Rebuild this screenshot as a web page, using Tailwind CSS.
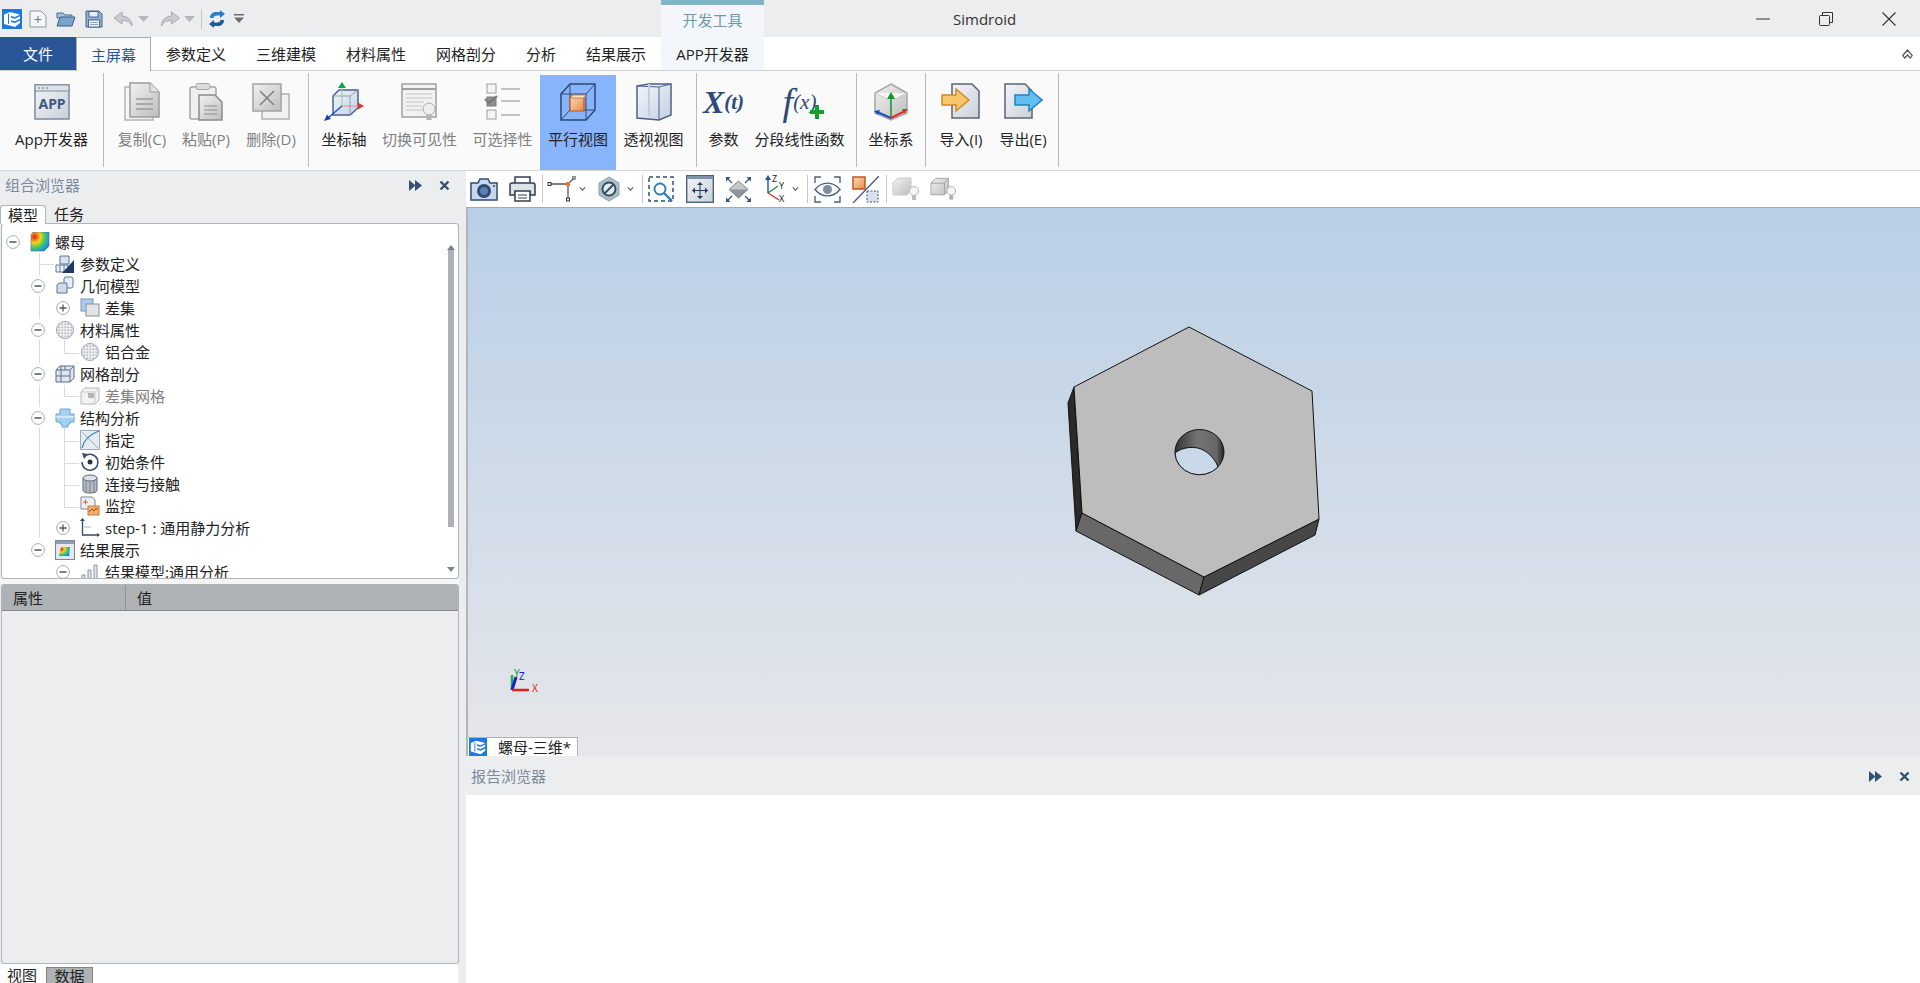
<!DOCTYPE html>
<html>
<head>
  <meta charset="utf-8" />
  <title>Simdroid</title>
  <script src="https://cdn.jsdelivr.net/npm/@tailwindcss/browser@4"></script>
</head>
<body class="w-[1920px] h-[983px] overflow-hidden flex flex-col bg-white text-[15px] leading-[20px] text-[#222] font-['Open_Sans','Noto_Sans_CJK_SC',sans-serif]">
  <svg class="absolute w-0 h-0">
    <defs>
      <linearGradient id="paper" x1="0" y1="0" x2="1" y2="1"><stop offset="0" stop-color="#f4f5f7"/><stop offset="1" stop-color="#c9d0da"/></linearGradient>
      <linearGradient id="gray" x1="0" y1="0" x2="1" y2="1"><stop offset="0" stop-color="#f2f2f2"/><stop offset="1" stop-color="#bdbdbd"/></linearGradient>
      <linearGradient id="glass" x1="0" y1="0" x2="1" y2="1"><stop offset="0" stop-color="#f3f6fa"/><stop offset="1" stop-color="#c3d0e2"/></linearGradient>
      <linearGradient id="orange" x1="0" y1="0" x2="1" y2="1"><stop offset="0" stop-color="#fbdcb8"/><stop offset="1" stop-color="#e98a45"/></linearGradient>
      <linearGradient id="wall" x1="0" y1="0" x2="1" y2="0"><stop offset="0" stop-color="#333"/><stop offset=".45" stop-color="#747474"/><stop offset=".85" stop-color="#666"/><stop offset="1" stop-color="#222"/></linearGradient>
      <radialGradient id="heat" cx=".2" cy=".25" r=".95"><stop offset="0" stop-color="#e8201a"/><stop offset=".35" stop-color="#f7d31a"/><stop offset=".6" stop-color="#46c95e"/><stop offset=".85" stop-color="#1c9ae0"/><stop offset="1" stop-color="#1c5fd0"/></radialGradient>
      <pattern id="dots" width="3" height="3" patternUnits="userSpaceOnUse"><rect width="3" height="3" fill="#eceef0"/><rect x=".5" y=".5" width="1.500" height="1.500" fill="#b2b6bb"/></pattern>
      <symbol id="logo" viewBox="0 0 20 20"><rect width="20" height="20" fill="#1f78dc"/><path d="M2 5.500L8 3l10 2.500-5 2.500-4-1v1.800l4 1 5-2.500v2.500l-5 2.500-4-1v1.800l4 1 5-2.500v2.500L13 18 2 15z" fill="#fff"/><path d="M6.500 5v10" stroke="#1f78dc"/></symbol>
      <symbol id="minus" viewBox="0 0 14 14"><circle cx="7" cy="7" r="6.400" fill="#fff" stroke="#a9adb1"/><path d="M3.500 7h7" stroke="#555" stroke-width="1.500"/></symbol>
      <symbol id="plus" viewBox="0 0 14 14"><circle cx="7" cy="7" r="6.400" fill="#fff" stroke="#a9adb1"/><path d="M3.500 7h7M7 3.500v7" stroke="#555" stroke-width="1.300"/></symbol>
      <symbol id="ball" viewBox="0 0 20 20"><circle cx="10" cy="10" r="8.500" fill="url(#dots)" stroke="#9aa3ad"/></symbol>
      <symbol id="chev" viewBox="0 0 8 6"><path d="M.8 1l3.200 3.400L7.200 1" fill="none" stroke="#555" stroke-width="1.200"/></symbol>
      <symbol id="ffw" viewBox="0 0 13 11"><path d="M0 0l6.500 5.500L0 11zM6 0l7 5.500L6 11z" fill="#33506f"/></symbol>
      <symbol id="cls" viewBox="0 0 11 11"><path d="M1.500 1.500l8 8M9.500 1.500l-8 8" stroke="#33506f" stroke-width="2.400"/></symbol>
    </defs>
  </svg>

  <!-- title bar -->
  <div class="h-[37px] bg-[#ecedef] flex items-center shrink-0">
    <div class="w-[661px] flex items-center h-full pl-[2px]">
      <svg class="w-[20px] h-[20px]"><use href="#logo"/></svg>
      <svg class="w-[18px] h-[18px] ml-[7px]" viewBox="0 0 18 18"><path d="M1 1h11l5 5v11H1z" fill="#f5f6f8" stroke="#8b97a8"/><path d="M9 6v7M5.500 9.500h7" stroke="#6c7787"/></svg>
      <svg class="w-[20px] h-[18px] ml-[9px]" viewBox="0 0 20 18"><path d="M1 3h6l2 2h7v3H1z" fill="#a8c0da" stroke="#4b6b90"/><path d="M1 16l3-9h15l-3 9z" fill="#7aa3cc" stroke="#3f6189"/></svg>
      <svg class="w-[18px] h-[18px] ml-[9px]" viewBox="0 0 18 18"><path d="M1 1h13l3 3v13H1z" fill="#8fb0d2" stroke="#48688c"/><rect x="4" y="1.500" width="9" height="5.500" fill="#e9eff6" stroke="#48688c"/><rect x="3.500" y="10" width="11" height="7" fill="#f2f4f7" stroke="#48688c"/><path d="M5 12.500h8M5 14.500h8" stroke="#8fa3ba"/></svg>
      <svg class="w-[21px] h-[18px] ml-[10px]" viewBox="0 0 21 18"><path d="M9 2L1 8l8 6v-3.500c5 0 8 1.500 10 5.500 0-6-4-9.500-10-10z" fill="#c9ccd1" stroke="#a6abb2"/></svg>
      <svg class="w-[11px] h-[6px] ml-[4px]" viewBox="0 0 11 6"><path d="M0 0h11L5.500 6z" fill="#b4b7bc"/></svg>
      <svg class="w-[22px] h-[18px] ml-[10px]" viewBox="0 0 21 18"><path d="M12 2l8 6-8 6v-3.500c-5 0-8 1.500-10 5.500 0-6 4-9.500 10-10z" fill="#c9ccd1" stroke="#a6abb2"/></svg>
      <svg class="w-[11px] h-[6px] ml-[3px]" viewBox="0 0 11 6"><path d="M0 0h11L5.500 6z" fill="#b4b7bc"/></svg>
      <div class="w-px h-[20px] bg-[#c4c6c9] ml-[6px]"></div>
      <svg class="w-[16px] h-[18px] ml-[7px]" viewBox="0 0 16 18"><path d="M1 8c0-4 3-6 6-6h4V0l5 4-5 4V5.500H8C6 5.500 4.500 6.500 4.500 8z" fill="#2b7fc7"/><path d="M15 10c0 4-3 6-6 6H5v2l-5-4 5-4v2.500h3c2 0 3.500-1 3.500-2.500z" fill="#1c5c98"/></svg>
      <svg class="w-[10px] h-[9px] ml-[9px]" viewBox="0 0 10 9"><path d="M0 0h10v1.500H0zM0 3.500h10L5 9z" fill="#6a6d72"/></svg>
    </div>
    <div class="w-[103px] h-full bg-[#f3f7fb] border-t-[5px] border-[#7fb5c4] text-[#6d9aa8] flex items-center justify-center pb-[2px]">开发工具</div>
    <div class="ml-[189px] text-[#333]">Simdroid</div>
    <div class="ml-auto flex h-full">
      <div class="w-[63px] flex items-center justify-center"><svg class="w-[14px] h-[14px]" viewBox="0 0 14 14"><path d="M0 7h14" stroke="#333"/></svg></div>
      <div class="w-[63px] flex items-center justify-center"><svg class="w-[14px] h-[14px]" viewBox="0 0 14 14"><path d="M3.500 3.500V.5h10v10h-3" fill="none" stroke="#333"/><rect x=".5" y="3.500" width="10" height="10" rx="1" fill="none" stroke="#333"/></svg></div>
      <div class="w-[63px] flex items-center justify-center"><svg class="w-[14px] h-[14px]" viewBox="0 0 14 14"><path d="M.5.5l13 13M13.500.5l-13 13" stroke="#333" stroke-width="1.100"/></svg></div>
    </div>
  </div>

  <!-- ribbon tabs -->
  <div class="h-[34px] shrink-0 bg-white flex border-b border-[#cfcfcf]">
    <div class="w-[76px] bg-[#2a5597] text-white flex items-center justify-center">文件</div>
    <div class="h-[34px] px-[14px] bg-[#fafafa] border border-b-0 border-[#a9abad] text-[#2a5597] flex items-center">主屏幕</div>
    <div class="px-[15px] flex items-center">参数定义</div>
    <div class="px-[15px] flex items-center">三维建模</div>
    <div class="px-[15px] flex items-center">材料属性</div>
    <div class="px-[15px] flex items-center">网格剖分</div>
    <div class="px-[15px] flex items-center">分析</div>
    <div class="px-[15px] flex items-center">结果展示</div>
    <div class="w-[103px] bg-[#f3f7fb] flex items-center justify-center">APP开发器</div>
    <div class="ml-auto pr-[7px] flex items-center"><svg class="w-[11px] h-[10px]" viewBox="0 0 11 10"><path d="M.8 6.500L5.500 1l4.700 5.500-2 2.500-2.700-3-2.700 3z" fill="#fff" stroke="#555" stroke-width="1.200"/></svg></div>
  </div>

  <!-- ribbon -->
  <div class="h-[100px] shrink-0 bg-[#fafafa] border-b border-[#d6d6d6] flex items-start pt-[4px]">
    <div class="w-[103px] h-[95px] flex flex-col items-center">
      <svg class="mt-[7px] w-[40px] h-[40px]" viewBox="0 0 40 40"><rect x="3" y="3" width="34" height="34" fill="url(#paper)" stroke="#7c8a9e" stroke-width="1.500"/><rect x="3" y="3" width="34" height="6" fill="#dfe3e9" stroke="#7c8a9e"/><path d="M6 6h2M10 6h2M14 6h2" stroke="#69778b"/><text x="20" y="27" text-anchor="middle" font-size="14" font-weight="700" fill="#3f5a80" font-family="Noto Sans">APP</text></svg>
      <div class="mt-[7px]">App开发器</div>
    </div>
    <div class="w-px h-[94px] -mt-[2px] bg-[#b8babd]"></div>

    <div class="flex pl-[6px] pr-[4px] w-[204px] text-[#808080]">
      <div class="w-[64px] h-[95px] flex flex-col items-center">
        <svg class="mt-[7px] w-[40px] h-[40px]" viewBox="0 0 40 40"><rect x="3" y="5" width="28" height="33" fill="#f4f4f4" stroke="#b3b3b3" stroke-width="1.500"/><path d="M8 1h20l9 9v25H8z" fill="url(#gray)" stroke="#9c9c9c" stroke-width="1.500"/><path d="M28 1v9h9" fill="#e2e2e2" stroke="#9c9c9c"/><path d="M14 17h17M14 22h17M14 27h17" stroke="#9a9a9a" stroke-width="1.500"/></svg>
        <div class="mt-[7px]">复制(C)</div>
      </div>
      <div class="w-[64px] h-[95px] flex flex-col items-center">
        <svg class="mt-[7px] w-[40px] h-[40px]" viewBox="0 0 40 40"><rect x="4" y="5" width="26" height="32" rx="2" fill="#efefef" stroke="#a6a6a6" stroke-width="1.500"/><rect x="10" y="1.500" width="14" height="6" rx="2" fill="#dcdcdc" stroke="#a6a6a6"/><path d="M13 13h16l7 7v18H13z" fill="url(#gray)" stroke="#8c8c8c" stroke-width="1.500"/><path d="M18 24h13M18 28h13M18 32h13" stroke="#8c8c8c"/></svg>
        <div class="mt-[7px]">粘贴(P)</div>
      </div>
      <div class="w-[66px] h-[95px] flex flex-col items-center">
        <svg class="mt-[7px] w-[40px] h-[40px]" viewBox="0 0 40 40"><rect x="11" y="12" width="27" height="25" fill="#f1f1f1" stroke="#b0b0b0" stroke-width="1.500"/><rect x="2" y="2" width="28" height="27" fill="url(#gray)" stroke="#a3a3a3" stroke-width="1.500"/><path d="M9 9l14 14M23 9L9 23" stroke="#7f7f7f" stroke-width="1.500"/></svg>
        <div class="mt-[7px]">删除(D)</div>
      </div>
    </div>
    <div class="w-px h-[94px] -mt-[2px] bg-[#b8babd]"></div>

    <div class="flex pl-[5px] w-[387px]">
      <div class="w-[60px] h-[95px] flex flex-col items-center">
        <svg class="mt-[7px] w-[40px] h-[40px]" viewBox="0 0 40 40"><path d="M9 14l6-6h19v18l-8 7H9z" fill="url(#glass)" stroke="#49628a" stroke-width="1.500"/><path d="M9 14h17v19M26 14l8-6" fill="none" stroke="#8ea2c0"/><path d="M18 24V3" stroke="#8fd3a8"/><path d="M18 0l-4 6h8z" fill="#0aa24a"/><path d="M18 24h17" stroke="#ef8a8a"/><path d="M40 24l-6-3.500v7z" fill="#e8353a"/><path d="M18 24L4 36" stroke="#2151c4" stroke-width="1.500"/><path d="M0 39l3-6.500 4 4.500z" fill="#1745b8"/></svg>
        <div class="mt-[7px]">坐标轴</div>
      </div>
      <div class="w-[91px] h-[95px] flex flex-col items-center text-[#808080]">
        <svg class="mt-[7px] w-[40px] h-[40px]" viewBox="0 0 40 40"><rect x="2" y="2" width="34" height="33" fill="#f2f2f2" stroke="#a0a0a0" stroke-width="1.500"/><path d="M2 7h34" stroke="#a0a0a0" stroke-width="2"/><path d="M6 12h26M6 16h26M6 20h18M6 24h16M6 28h16" stroke="#c2c2c2"/><circle cx="29" cy="27" r="6" fill="#eeeeee" stroke="#ababab"/><rect x="26.500" y="33" width="5" height="5" fill="#b4b4b4"/></svg>
        <div class="mt-[7px]">切换可见性</div>
      </div>
      <div class="w-[75px] h-[95px] flex flex-col items-center text-[#808080]">
        <svg class="mt-[7px] w-[40px] h-[40px]" viewBox="0 0 40 40"><rect x="4" y="2" width="9" height="9" fill="#f5f5f5" stroke="#9c9c9c"/><rect x="4" y="15" width="9" height="9" fill="#8e8e8e" stroke="#7a7a7a"/><path d="M2 17l4 4 8-7" fill="none" stroke="#777" stroke-width="2"/><rect x="4" y="28" width="9" height="9" fill="#f5f5f5" stroke="#9c9c9c"/><path d="M18 7h19M18 19h19M18 33h19" stroke="#b0b0b0" stroke-width="1.500"/></svg>
        <div class="mt-[7px]">可选择性</div>
      </div>
      <div class="w-[76px] h-[95px] bg-[#88b4fb] flex flex-col items-center">
        <svg class="mt-[7px] w-[40px] h-[40px]" viewBox="0 0 40 40"><path d="M3 12L12 2h25v26l-9 10H3z" fill="none" stroke="#2c4877" stroke-width="1.500"/><path d="M3 12h25v26M28 12l9-10M12 2v26h25M12 28l-9 10" fill="none" stroke="#2c4877"/><rect x="12" y="14" width="14" height="15" rx="1" fill="url(#orange)" stroke="#c8531c" stroke-width="1.200"/><path d="M12 16l3-3h13l-2 3z" fill="#fde4c8" stroke="#c8531c" stroke-width=".7"/></svg>
        <div class="mt-[7px]">平行视图</div>
      </div>
      <div class="w-[75px] h-[95px] flex flex-col items-center">
        <svg class="mt-[7px] w-[40px] h-[40px]" viewBox="0 0 40 40"><path d="M3 4l12-2h22v31l-12 5-22-2z" fill="url(#glass)" stroke="#4e6288" stroke-width="1.500"/><path d="M25 5v33M25 5L3 4M25 5l12-3" fill="none" stroke="#4e6288"/><path d="M15 2v32" stroke="#c5cede" stroke-width="2"/></svg>
        <div class="mt-[7px]">透视视图</div>
      </div>
    </div>
    <div class="w-px h-[94px] -mt-[2px] bg-[#b8babd]"></div>

    <div class="flex pl-[4px] w-[159px]">
      <div class="w-[45px] h-[95px] flex flex-col items-center">
        <div class="mt-[7px] h-[40px] flex items-center text-[#2d4a78] font-['Liberation_Serif',serif] italic font-bold whitespace-nowrap"><span class="text-[32px] leading-[30px]">X</span><span class="text-[21px] leading-[30px]">(t)</span></div>
        <div class="mt-[7px]">参数</div>
      </div>
      <div class="w-[107px] h-[95px] flex flex-col items-center">
        <div class="relative mt-[7px] h-[40px] flex items-center text-[#2d4a78] font-['Liberation_Serif',serif] italic whitespace-nowrap">
          <span class="text-[38px] leading-[30px]">f</span><span class="text-[21px] leading-[30px]">(x)</span>
          <svg class="absolute left-[27px] top-[23px] w-[14px] h-[14px]" viewBox="0 0 14 14"><path d="M5 0h4v5h5v4H9v5H5V9H0V5h5z" fill="#0fa030"/></svg>
        </div>
        <div class="mt-[7px] whitespace-nowrap">分段线性函数</div>
      </div>
    </div>
    <div class="w-px h-[94px] -mt-[2px] bg-[#b8babd]"></div>

    <div class="w-[68px] h-[95px] flex flex-col items-center">
      <svg class="mt-[7px] w-[40px] h-[40px]" viewBox="0 0 40 40"><path d="M20 2l16 9v20L20 38 4 31V11z" fill="url(#gray)" stroke="#a8a8a8" stroke-width="1.500"/><path d="M4 11l16 8 16-8" fill="#f6f6f6" stroke="#c9c9c9"/><path d="M20 35V14" stroke="#089a2d" stroke-width="1.500"/><path d="M20 10l-4 7h8z" fill="#089a2d"/><path d="M20 36L6 30" stroke="#1d4fbe" stroke-width="2"/><path d="M3 29l6-1-2 5z" fill="#1d4fbe"/><path d="M20 36l14-7" stroke="#de2e2e" stroke-width="2"/><path d="M37 27l-6 0 2 5z" fill="#de2e2e"/></svg>
      <div class="mt-[7px]">坐标系</div>
    </div>
    <div class="w-px h-[94px] -mt-[2px] bg-[#b8babd]"></div>

    <div class="flex pl-[4px] w-[132px]">
      <div class="w-[62px] h-[95px] flex flex-col items-center">
        <svg class="mt-[7px] w-[40px] h-[40px]" viewBox="0 0 40 40"><path d="M11 2h20l7 7v27H11z" fill="url(#paper)" stroke="#5b6472" stroke-width="1.500"/><path d="M1 13h14V7l13 11-13 11v-6H1z" fill="#f8c66f" stroke="#d18a24" stroke-width="1.500"/></svg>
        <div class="mt-[7px]">导入(I)</div>
      </div>
      <div class="w-[62px] h-[95px] flex flex-col items-center">
        <svg class="mt-[7px] w-[40px] h-[40px]" viewBox="0 0 40 40"><path d="M2 2h20l7 7v27H2z" fill="url(#paper)" stroke="#5b6472" stroke-width="1.500"/><path d="M12 13h14V7l13 11-13 11v-6H12z" fill="#62bdf0" stroke="#2183c4" stroke-width="1.500"/></svg>
        <div class="mt-[7px]">导出(E)</div>
      </div>
    </div>
    <div class="w-px h-[94px] -mt-[2px] bg-[#b8babd]"></div>
  </div>

  <!-- main -->
  <div class="flex-1 flex min-h-0">
    <!-- left dock -->
    <div class="w-[466px] shrink-0 flex flex-col bg-[#ecedef]">
      <div class="h-[34px] flex items-center pl-[5px] pb-[6px] text-[#7b8a9c]">
        <span>组合浏览器</span>
        <svg class="ml-auto w-[13px] h-[11px]"><use href="#ffw"/></svg>
        <svg class="ml-[17px] mr-[16px] w-[11px] h-[11px]"><use href="#cls"/></svg>
      </div>
      <div class="h-[18px] flex">
        <div class="w-[46px] h-[19px] bg-white border border-b-0 border-[#b0b4b8] rounded-t-[3px] flex items-center justify-center z-10">模型</div>
        <div class="pl-[8px] flex items-center">任务</div>
      </div>
      <div class="relative ml-[1px] w-[458px] h-[356px] shrink-0 bg-white border border-[#b0b4b8] rounded-[3px] overflow-hidden pt-[7px]">
        <!-- tree guide lines -->
        <svg class="absolute left-0 top-0 w-[100px] h-[354px]" viewBox="0 0 100 354"><g transform="translate(-1,-224)" fill="none" stroke="#d8dadc"><path d="M38.500 253v22M38.500 264.500H53M38.500 296v23M38.500 340v23M63.500 340v13.500H78M38.500 385v22M63.500 385v11.500H78M38.500 428v110M63.500 428v80M63.500 441.500H78M63.500 463.500H78M63.500 485.500H78M63.500 507.500H78"/></g></svg>

        <div class="relative h-[22px] flex items-center pl-[4px]"><svg class="w-[14px] h-[14px]"><use href="#minus"/></svg>
          <svg class="ml-[10px] w-[20px] h-[20px]" viewBox="0 0 20 20"><path d="M3 0h16v14l-5 5H1V3z" fill="url(#heat)" stroke="#4a6a94" stroke-width=".6"/></svg><span class="ml-[5px]">螺母</span></div>
        <div class="relative h-[22px] flex items-center pl-[29px]"><span class="w-[14px]"></span>
          <svg class="ml-[10px] w-[20px] h-[20px]" viewBox="0 0 20 20"><path d="M5 2h9v8H5z" fill="#d8e2ee" stroke="#5a7698"/><path d="M1 11h12v7H1zM5 11v7M9 11v7" fill="#eef2f6" stroke="#5a7698"/><path d="M19 6v13H7z" fill="#1d3b66"/></svg><span class="ml-[5px]">参数定义</span></div>
        <div class="relative h-[22px] flex items-center pl-[29px]"><svg class="w-[14px] h-[14px]"><use href="#minus"/></svg>
          <svg class="ml-[10px] w-[20px] h-[20px]" viewBox="0 0 20 20"><rect x="9" y="1" width="9" height="11" rx="2" fill="#e6edf5" stroke="#5a7698"/><path d="M2 9l2-2h8v10H2z" fill="#cfdcea" stroke="#5a7698"/></svg><span class="ml-[5px]">几何模型</span></div>
        <div class="relative h-[22px] flex items-center pl-[54px]"><svg class="w-[14px] h-[14px]"><use href="#plus"/></svg>
          <svg class="ml-[10px] w-[20px] h-[20px]" viewBox="0 0 20 20"><rect x="1" y="1" width="12" height="12" fill="#a9cdf0" stroke="#7c93ad"/><rect x="6" y="6" width="13" height="12" fill="#e1e3e6" stroke="#8a8f96"/></svg><span class="ml-[5px]">差集</span></div>
        <div class="relative h-[22px] flex items-center pl-[29px]"><svg class="w-[14px] h-[14px]"><use href="#minus"/></svg>
          <svg class="ml-[10px] w-[20px] h-[20px]"><use href="#ball"/></svg><span class="ml-[5px]">材料属性</span></div>
        <div class="relative h-[22px] flex items-center pl-[54px]"><span class="w-[14px]"></span>
          <svg class="ml-[10px] w-[20px] h-[20px]"><use href="#ball"/></svg><span class="ml-[5px]">铝合金</span></div>
        <div class="relative h-[22px] flex items-center pl-[29px]"><svg class="w-[14px] h-[14px]"><use href="#minus"/></svg>
          <svg class="ml-[10px] w-[20px] h-[20px]" viewBox="0 0 20 20"><path d="M1 6l4-4h14v12l-4 4H1zM1 6h14v12M15 6l4-4M6 2v16M1 12h14M10 2v4" fill="#dfe6ee" stroke="#5a6f8a"/></svg><span class="ml-[5px]">网格剖分</span></div>
        <div class="relative h-[22px] flex items-center pl-[54px]"><span class="w-[14px]"></span>
          <svg class="ml-[10px] w-[20px] h-[20px]" viewBox="0 0 20 20"><path d="M1 6l4-4h14v12l-4 4H1z" fill="#f2f2f2" stroke="#b5b5b5"/><path d="M1 6h14v12M15 6l4-4" fill="none" stroke="#c8c8c8"/><rect x="8" y="7" width="6" height="5" fill="#b5b5b5"/></svg><span class="ml-[5px] text-[#808080]">差集网格</span></div>
        <div class="relative h-[22px] flex items-center pl-[29px]"><svg class="w-[14px] h-[14px]"><use href="#minus"/></svg>
          <svg class="ml-[10px] w-[20px] h-[20px]" viewBox="0 0 20 20"><path d="M5 1h10v5h4v8h-4v2h-2v3H7v-3H5v-2H1V6h4z" fill="#a4d2f2" stroke="#6aa6d2"/><path d="M1 9h18" stroke="#fff"/></svg><span class="ml-[5px]">结构分析</span></div>
        <div class="relative h-[22px] flex items-center pl-[54px]"><span class="w-[14px]"></span>
          <svg class="ml-[10px] w-[20px] h-[20px]" viewBox="0 0 20 20"><rect x=".5" y=".5" width="19" height="19" fill="#e6ebf2" stroke="#9eabbb"/><path d="M2 2l16 16" stroke="#9eabbb"/><path d="M2 18C4 10 10 4 19 1" fill="none" stroke="#2e7bc5" stroke-width="1.200"/></svg><span class="ml-[5px]">指定</span></div>
        <div class="relative h-[22px] flex items-center pl-[54px]"><span class="w-[14px]"></span>
          <svg class="ml-[10px] w-[20px] h-[20px]" viewBox="0 0 20 20"><path d="M5 4a8 8 0 1 1-3 6" fill="none" stroke="#3a4f6d" stroke-width="1.500"/><path d="M2 1l6 1-4 5z" fill="#3a4f6d"/><circle cx="10" cy="10" r="2.500" fill="#1e3554"/></svg><span class="ml-[5px]">初始条件</span></div>
        <div class="relative h-[22px] flex items-center pl-[54px]"><span class="w-[14px]"></span>
          <svg class="ml-[10px] w-[20px] h-[20px]" viewBox="0 0 20 20"><path d="M3 4v12c0 2 3 3 7 3s7-1 7-3V4z" fill="#b2bac3" stroke="#5e6b79"/><ellipse cx="10" cy="4" rx="7" ry="3" fill="#dfe3e7" stroke="#5e6b79"/><path d="M6 7v11M10 7v12M14 7v11" stroke="#7d8894"/></svg><span class="ml-[5px]">连接与接触</span></div>
        <div class="relative h-[22px] flex items-center pl-[54px]"><span class="w-[14px]"></span>
          <svg class="ml-[10px] w-[20px] h-[20px]" viewBox="0 0 20 20"><path d="M1 1h11l3 3v9H1z" fill="#eef1f5" stroke="#7c8796"/><path d="M3 6h5M5.500 3.500v5" stroke="#d9613a"/><rect x="8" y="10" width="11" height="9" fill="#f3ad6c" stroke="#d17a34"/><path d="M9 16l3-3 2 2 2-3 2 2" fill="none" stroke="#9a4e16"/></svg><span class="ml-[5px]">监控</span></div>
        <div class="relative h-[22px] flex items-center pl-[54px]"><svg class="w-[14px] h-[14px]"><use href="#plus"/></svg>
          <svg class="ml-[10px] w-[20px] h-[20px]" viewBox="0 0 20 20"><path d="M2.500 1v16H19" fill="none" stroke="#2e4a6e" stroke-width="1.300"/><path d="M4 9h7" stroke="#a7b5c6"/><path d="M0 3l2.500-3L5 3zM17 15l3 2-3 2z" fill="#2e4a6e"/></svg><span class="ml-[5px] whitespace-nowrap">step-1 : 通用静力分析</span></div>
        <div class="relative h-[22px] flex items-center pl-[29px]"><svg class="w-[14px] h-[14px]"><use href="#minus"/></svg>
          <svg class="ml-[10px] w-[20px] h-[20px]" viewBox="0 0 20 20"><rect x=".5" y=".5" width="19" height="19" fill="#e4e8ee" stroke="#76879c"/><rect x="1" y="1" width="18" height="3" fill="#8e9db0"/><path d="M6 7h9l-1 9H4z" fill="url(#heat)"/></svg><span class="ml-[5px]">结果展示</span></div>
        <div class="relative h-[22px] flex items-center pl-[54px]"><svg class="w-[14px] h-[14px]"><use href="#minus"/></svg>
          <svg class="ml-[10px] w-[20px] h-[20px]" viewBox="0 0 20 20"><path d="M2 13h3v7H2zM8 8h3v12H8zM14 3h3v17h-3z" fill="#dfe3e8" stroke="#8d98a6"/></svg><span class="ml-[5px] whitespace-nowrap">结果模型:通用分析</span></div>

        <!-- scrollbar -->
        <div class="absolute right-[4px] top-[21px] bottom-[2px] w-[7px] flex flex-col items-center">
          <svg class="w-[8px] h-[5px] shrink-0" viewBox="0 0 8 5"><path d="M4 0l4 5H0z" fill="#6f8794"/></svg>
          <div class="w-[6px] h-[277px] bg-[#aeb2b5] shrink-0"></div>
          <svg class="mt-auto mb-[4px] w-[8px] h-[5px] shrink-0" viewBox="0 0 8 5"><path d="M4 5L0 0h8z" fill="#6f8794"/></svg>
        </div>
      </div>
      <div class="h-[5px] w-[459px] shrink-0 bg-[#f6f6f6]"></div>
      <div class="ml-[1px] w-[458px] h-[380px] shrink-0 border border-[#b0b4b8] rounded-[3px] flex flex-col overflow-hidden">
        <div class="h-[26px] bg-[#aeb2b5] border-b border-[#85898d] flex items-center">
          <div class="w-[124px] h-full pl-[11px] flex items-center border-r border-[#909498]">属性</div>
          <div class="pl-[11px]">值</div>
        </div>
      </div>
      <div class="flex-1 flex overflow-hidden">
        <div class="w-[458px] bg-white flex pt-[3px] pl-[7px] text-[15px] leading-[16px]">
          <div>视图</div>
          <div class="ml-[9px] w-[47px] h-[18px] bg-[#aeb2b5] border border-[#7e8387] flex items-start justify-center">数据</div>
        </div>
      </div>
    </div>

    <!-- centre -->
    <div class="flex-1 flex flex-col min-w-0">
      <div class="h-[37px] shrink-0 bg-white border-b border-[#a9a9a9] flex items-center pl-[4px]">
        <svg class="w-[28px] h-[24px]" viewBox="0 0 28 24"><path d="M1 6h7l2-4h8l2 4h7v17H1z" fill="#c8d8ec" stroke="#2f4b73" stroke-width="1.500"/><circle cx="14" cy="14" r="7" fill="#2f4b73"/><circle cx="14" cy="14" r="4" fill="#5d80b2"/><circle cx="24" cy="9" r="1" fill="#2f4b73"/></svg>
        <svg class="ml-[11px] w-[27px] h-[26px]" viewBox="0 0 27 26"><path d="M6 1h15v7H6z" fill="#fff" stroke="#333e4d" stroke-width="1.500"/><path d="M1 9c0-1 1-2 2-2h21c1 0 2 1 2 2v10h-5v-3H6v3H1z" fill="#dde2e8" stroke="#333e4d" stroke-width="1.500"/><path d="M6 15h15v10H6z" fill="#fff" stroke="#333e4d" stroke-width="1.500"/><path d="M9 19h9M9 22h9" stroke="#333e4d"/></svg>
        <div class="ml-[6px] w-px h-[28px] bg-[#c4c6c9]"></div>
        <svg class="ml-[4px] w-[29px] h-[28px]" viewBox="0 0 29 28"><path d="M3 9h18M21 9v15M21 9l5-5" fill="none" stroke="#4a5a70" stroke-width="1.300"/><rect x="1" y="7.500" width="3" height="3" fill="#fff" stroke="#333"/><rect x="19" y="7" width="4" height="4" fill="#e9792c"/><rect x="19.500" y="23" width="3" height="3" fill="#fff" stroke="#333"/><path d="M26 1v4M28 1v4" stroke="#333"/></svg>
        <svg class="ml-[3px] w-[7px] h-[6px]"><use href="#chev"/></svg>
        <svg class="ml-[12px] w-[22px] h-[26px]" viewBox="0 0 22 26"><path d="M11 1l10 6v12l-10 6L1 19V7z" fill="#a9bfc8" stroke="#8aa2ad"/><circle cx="11" cy="13" r="6.500" fill="#e6edf0" stroke="#37505f" stroke-width="2"/><path d="M6.500 17.500l9-9" stroke="#37505f" stroke-width="2"/></svg>
        <svg class="ml-[7px] w-[7px] h-[6px]"><use href="#chev"/></svg>
        <div class="ml-[8px] w-px h-[28px] bg-[#c4c6c9]"></div>
        <svg class="ml-[5px] w-[26px] h-[26px]" viewBox="0 0 26 26"><rect x="1" y="1" width="24" height="24" fill="none" stroke="#33506f" stroke-width="1.500" stroke-dasharray="4 3"/><circle cx="12" cy="13" r="5.500" fill="#fff" stroke="#2a79c4" stroke-width="1.800"/><path d="M16 17l8 8" stroke="#2a79c4" stroke-width="2.400"/></svg>
        <svg class="ml-[12px] w-[28px] h-[28px]" viewBox="0 0 28 28"><rect x=".7" y=".7" width="26.600" height="26.600" fill="url(#paper)" stroke="#4a617f" stroke-width="1.400"/><rect x="1" y="1" width="26" height="3" fill="#7f90a8"/><path d="M14 9v13M8 15.500h12" stroke="#243c5c"/><path d="M14 7l-3 3h6zM14 24l-3-3h6zM6 15.500l3-3v6zM22 15.500l-3-3v6z" fill="#243c5c"/></svg>
        <svg class="ml-[11px] w-[27px] h-[27px]" viewBox="0 0 27 27"><path d="M13.500 5L23 13.500 13.500 22 4 13.500z" fill="#c5c8cc" stroke="#7e848c"/><path d="M4 13.500h19l-9.500 8.500z" fill="#8f949b"/><path d="M7 7L2 2M20 7l5-5M7 20l-5 5M20 20l5 5" stroke="#35567c" stroke-width="1.300"/><path d="M1 1h4.500L1 5.500zM26 1h-4.500L26 5.500zM1 26h4.500L1 21.500zM26 26h-4.500l4.500-4.500z" fill="#35567c"/></svg>
        <svg class="ml-[12px] w-[23px] h-[28px]" viewBox="0 0 23 28"><path d="M4 18V4" stroke="#1f4fb5" stroke-width="1.400"/><path d="M4 0L1 5h6z" fill="#1f4fb5"/><path d="M4 18l10-7" stroke="#13953c" stroke-width="1.400"/><path d="M4 18l11 7" stroke="#e12f2f" stroke-width="1.400"/><text x="8" y="7" font-size="9" fill="#222" font-family="Noto Sans">Z</text><text x="15" y="14" font-size="9" fill="#222" font-family="Noto Sans">Y</text><text x="15" y="27" font-size="9" fill="#222" font-family="Noto Sans">X</text></svg>
        <svg class="ml-[5px] w-[7px] h-[6px]"><use href="#chev"/></svg>
        <div class="ml-[8px] w-px h-[28px] bg-[#c4c6c9]"></div>
        <svg class="ml-[6px] w-[27px] h-[27px]" viewBox="0 0 27 27"><path d="M1 7V1h6M20 1h6v6M1 20v6h6M26 20v6h-6" fill="none" stroke="#4a617f" stroke-width="1.400"/><path d="M1 13.500C8 5 19 5 26 13.500 19 22 8 22 1 13.500z" fill="#fff" stroke="#4a617f" stroke-width="1.400"/><circle cx="13.500" cy="13.500" r="4.500" fill="#7c8da3"/></svg>
        <svg class="ml-[11px] w-[27px] h-[27px]" viewBox="0 0 27 27"><rect x="1" y="1" width="12" height="12" fill="url(#orange)" stroke="#b95a25" stroke-width="1.500"/><path d="M27 0L1 27" stroke="#44597a" stroke-width="1.300"/><rect x="15" y="15" width="11" height="11" fill="#d9e2ed" stroke="#44597a" stroke-dasharray="2 1.500"/></svg>
        <div class="ml-[7px] w-px h-[28px] bg-[#c4c6c9]"></div>
        <svg class="ml-[5px] w-[28px] h-[26px]" viewBox="0 0 28 26"><path d="M1 7l5-5h13v12l-4 5H1z" fill="url(#gray)" stroke="#c9c9c9"/><circle cx="22" cy="15" r="4.500" fill="#f7f7f7" stroke="#b8b8b8"/><rect x="20" y="19" width="4" height="5" fill="#bdbdbd"/></svg>
        <svg class="ml-[10px] w-[27px] h-[26px]" viewBox="0 0 28 26"><path d="M1 7l5-5h13v12l-4 5H1z" fill="url(#gray)" stroke="#a2a2a2"/><path d="M1 7h14v12M15 7l4-5" fill="none" stroke="#a2a2a2"/><circle cx="22" cy="15" r="4.500" fill="#f7f7f7" stroke="#b0b0b0"/><rect x="20" y="19" width="4" height="5" fill="#b0b0b0"/></svg>
      </div>

      <!-- 3D viewport -->
      <div class="relative h-[529px] shrink-0 border-l-2 border-[#b3b5b8] bg-gradient-to-b from-[#b9cfe6] to-[#e4e6ea]">
        <svg class="absolute inset-0 w-full h-full" viewBox="468 208 1452 529">
          <path d="M1074 387l-6 16 8 128 6-18z" fill="#2a2a2a" stroke="#111"/>
          <path d="M1082 513l-6 18 123 64 5-18z" fill="#686868" stroke="#111"/>
          <path d="M1204 577l-5 18 116-60 4-16z" fill="#474747" stroke="#111"/>
          <path d="M1189 327l123 64 7 128-115 58-122-64-8-126z" fill="#bdbdbd" stroke="#111"/>
          <ellipse cx="1199.500" cy="452" rx="24.500" ry="22.500" fill="url(#wall)" stroke="#111"/>
          <path d="M1175 453C1182 447 1196 445 1205 451 1211 455 1216 461 1218 467A24.500 22.500 0 0 1 1175 453z" fill="#c9d9ea" stroke="#111"/>
          <path d="M512 690v-15" stroke="#22b04a" stroke-width="2.500"/>
          <path d="M512 690l4-13" stroke="#1b1bd0" stroke-width="3"/>
          <path d="M512 690h17" stroke="#e81c1c" stroke-width="2.500"/>
          <text x="514" y="677" font-size="10" fill="#18a040" font-family="Noto Sans">Y</text>
          <text x="519" y="680" font-size="10" fill="#1b1bd0" font-family="Noto Sans">Z</text>
          <text x="532" y="692" font-size="10" fill="#e81c1c" font-family="Noto Sans">X</text>
        </svg>
      </div>

      <!-- document tab -->
      <div class="h-[19px] shrink-0 bg-[#e6e8ec] border-l-2 border-[#b3b5b8] flex">
        <div class="w-[110px] bg-white border-t border-r border-[#b0b2b5] flex items-center">
          <svg class="w-[20px] h-[18px] shrink-0"><use href="#logo"/></svg>
          <span class="ml-[10px] whitespace-nowrap">螺母-三维*</span>
        </div>
      </div>

      <!-- report dock -->
      <div class="h-[39px] shrink-0 bg-[#ecedef] flex items-center pl-[5px] pt-[1px] text-[#7b8a9c]">
        <span>报告浏览器</span>
        <svg class="ml-auto w-[13px] h-[11px]"><use href="#ffw"/></svg>
        <svg class="ml-[17px] mr-[10px] w-[11px] h-[11px]"><use href="#cls"/></svg>
      </div>
      <div class="flex-1 bg-white"></div>
    </div>
  </div>
</body>
</html>
